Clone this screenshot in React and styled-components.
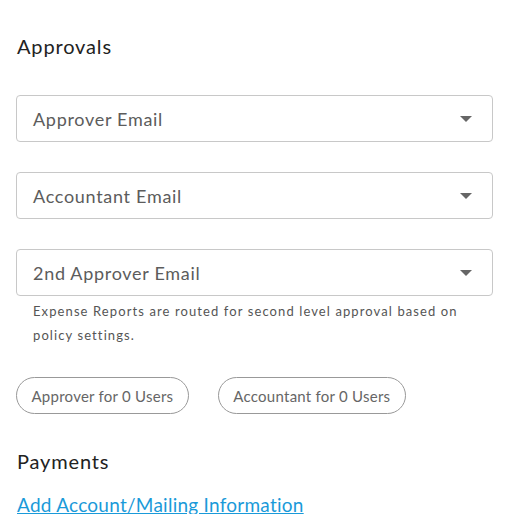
import React from "react";
import styled, { createGlobalStyle } from "styled-components";

const GlobalStyle = createGlobalStyle`
  body {
    margin: 0;
    background: #fff;
    font-family: Lato, "Open Sans", sans-serif;
  }
`;

const Page = styled.div`
  padding: 0 18px 0 16px;
  display: flex;
  flex-direction: column;
`;

const SectionTitle = styled.h2`
  margin: ${(p) => p.top}px 0 0 1px;
  font-size: 20px;
  font-weight: 400;
  line-height: 24px;
  letter-spacing: 0.85px;
  color: #222;
`;

const Fields = styled.div`
  margin-top: 37px;
  display: flex;
  flex-direction: column;
  gap: 30px;
`;

const Field = styled.div`
  display: flex;
  flex-direction: column;
`;

const Select = styled.div`
  height: 45px;
  border: 1px solid #c8c8c8;
  border-radius: 4px;
  display: flex;
  align-items: center;
  justify-content: space-between;
  padding: 0 20px 0 16px;
  font-size: 18px;
  letter-spacing: 0.7px;
  color: #5c5c5c;
  cursor: pointer;
`;

const Caret = styled.span`
  width: 0;
  height: 0;
  border-left: 6px solid transparent;
  border-right: 6px solid transparent;
  border-top: 6px solid #666;
`;

const Hint = styled.p`
  margin: 3px 0 0 17px;
  font-size: 13px;
  line-height: 24px;
  letter-spacing: 1.1px;
  color: #555;
`;

const Pills = styled.div`
  margin-top: 30px;
  display: flex;
  gap: 29px;
`;

const Pill = styled.button`
  height: 37px;
  padding: 0 14.5px;
  border: 1px solid #999;
  border-radius: 19px;
  background: #fff;
  font-family: Lato, "Open Sans", sans-serif;
  font-size: 15px;
  letter-spacing: 0.25px;
  color: #666;
  cursor: pointer;
`;

const Link = styled.a`
  margin: 20px 0 0 1px;
  font-size: 19px;
  line-height: 24px;
  letter-spacing: 0.25px;
  color: #1a9ad9;
  text-decoration: underline;
  cursor: pointer;
`;

const fields = [
  { label: "Approver Email" },
  { label: "Accountant Email" },
  {
    label: "2nd Approver Email",
    hint: "Expense Reports are routed for second level approval based on policy settings.",
  },
];

export default function App() {
  return (
    <>
      <GlobalStyle />
      <Page>
        <SectionTitle top={34}>Approvals</SectionTitle>
        <Fields>
          {fields.map((f) => (
            <Field key={f.label}>
              <Select>
                {f.label}
                <Caret />
              </Select>
              {f.hint && <Hint>{f.hint}</Hint>}
            </Field>
          ))}
        </Fields>
        <Pills>
          <Pill>Approver for 0 Users</Pill>
          <Pill>Accountant for 0 Users</Pill>
        </Pills>
        <SectionTitle top={35}>Payments</SectionTitle>
        <Link>Add Account/Mailing Information</Link>
      </Page>
    </>
  );
}
